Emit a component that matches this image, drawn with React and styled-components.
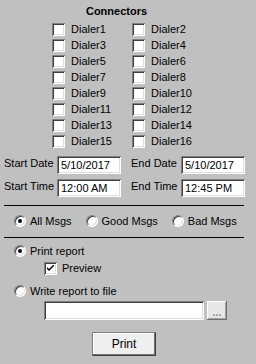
import React from 'react';
import styled, { createGlobalStyle } from 'styled-components';

const GlobalStyle = createGlobalStyle`
  html, body {
    margin: 0;
    padding: 0;
    background: #c0c0c0;
  }
  body {
    font-family: "Liberation Sans", Arial, sans-serif;
    font-size: 11px;
    color: #000;
  }
`

const Panel = styled.div`
  width: 256px;
  height: 364px;
  box-sizing: border-box;
  padding-top: 5px;
  display: flex;
  flex-direction: column;
  background: #c0c0c0;
`

const Connectors = styled.section`
  margin-left: 52px;
  width: 129px;
`

const Title = styled.div`
  font-weight: bold;
  text-align: center;
  line-height: 13px;
`

const DialerGrid = styled.div`
  margin-top: 3px;
  display: grid;
  grid-template-columns: 80px auto;
  grid-auto-rows: 16px;
`

const CheckRow = styled.label`
  display: flex;
  align-items: center;
  gap: ${p => p.gap || 6}px;
  height: ${p => p.h || 16}px;
  margin-left: ${p => p.indent || 0}px;
  margin-top: ${p => p.top || 0}px;
  line-height: 13px;
  white-space: nowrap;
`

const Box = styled.span`
  flex: none;
  width: 13px;
  height: 13px;
  box-sizing: border-box;
  background: #fff;
  box-shadow: inset 1px 1px #808080, inset -1px -1px #fff, inset 2px 2px #404040, inset -2px -2px #dfdfdf;
  display: flex;
  align-items: center;
  justify-content: center;
`

const DateBlock = styled.div`
  margin-top: 7px;
  margin-left: 4px;
  display: flex;
  flex-direction: column;
  gap: 5px;
`

const DateRow = styled.div`
  display: flex;
  gap: 10px;
`

const Field = styled.div`
  display: flex;
  align-items: flex-start;
`

const FieldLabel = styled.span`
  width: ${p => p.w}px;
  line-height: 13px;
  margin-top: 1px;
  white-space: nowrap;
`

const TextBox = styled.input`
  width: ${p => p.w}px;
  height: ${p => p.h || 18}px;
  box-sizing: border-box;
  margin: 0;
  padding: 0 2px 0 4px;
  border: none;
  outline: none;
  background: #fff;
  font: 11px "Liberation Sans", Arial, sans-serif;
  color: #000;
  box-shadow: inset 1px 1px #808080, inset -1px -1px #fff, inset 2px 2px #404040, inset -2px -2px #dfdfdf;
`

const Rule = styled.hr`
  margin: ${p => p.top}px 0 0 4px;
  width: 240px;
  height: 1px;
  border: none;
  background: #000;
`

const FilterRow = styled.div`
  margin-top: 8px;
  margin-left: 14px;
  display: flex;
  gap: 14px;
`

const RadioRow = styled.label`
  display: flex;
  align-items: center;
  gap: 4px;
  height: 14px;
  margin-left: ${p => p.indent || 0}px;
  margin-top: ${p => p.top || 0}px;
  line-height: 13px;
  white-space: nowrap;
`

const Radio = styled.span`
  flex: none;
  position: relative;
  width: 12px;
  height: 12px;
  box-sizing: border-box;
  border-radius: 50%;
  background: #fff;
  border: 1px solid;
  border-color: #808080 #fff #fff #808080;
  box-shadow: inset 1px 1px #404040, inset -1px -1px #dfdfdf;

  &::after {
    content: '';
    display: ${p => (p.on ? 'block' : 'none')};
    position: absolute;
    left: 3px;
    top: 3px;
    width: 4px;
    height: 4px;
    border-radius: 50%;
    background: #000;
  }
`

const FileRow = styled.div`
  margin-top: 3px;
  margin-left: 44px;
  display: flex;
  gap: 3px;
`

const BrowseButton = styled.button`
  width: 20px;
  height: 19px;
  margin: 0;
  padding: 0 0 2px;
  border: none;
  background: #e8e8e8;
  color: #8a8a8a;
  font: bold 11px "Liberation Sans", Arial, sans-serif;
  line-height: 1;
  letter-spacing: 0;
  display: flex;
  align-items: flex-end;
  justify-content: center;
  box-shadow: inset -1px -1px #707070, inset 1px 1px #fff, inset -2px -2px #a0a0a0;
`

const PrintButton = styled.button`
  margin: 12px 0 0 92px;
  width: 64px;
  height: 24px;
  padding: 0;
  border: 1px solid #808080;
  border-right-color: #404040;
  border-bottom-color: #404040;
  background: #efefef;
  color: #000;
  font: 12px "Liberation Sans", Arial, sans-serif;
  box-shadow: inset -1px -1px #707070, inset 1px 1px #fff;
`

const dialers = Array.from({ length: 16 }, (_, i) => `Dialer${i + 1}`)

function Check({ checked }) {
  return (
    <Box>
      {checked && (
        <svg width="7" height="7" viewBox="0 0 7 7">
          <path d="M0 2 L0 4 L2 6 L7 1 L7 -1 L2 4 Z" fill="#000" />
        </svg>
      )}
    </Box>
  )
}

export default function App() {
  return (
    <>
      <GlobalStyle />
      <Panel>
        <Connectors>
          <Title>Connectors</Title>
          <DialerGrid>
            {dialers.map(name => (
              <CheckRow key={name}>
                <Check />
                <span>{name}</span>
              </CheckRow>
            ))}
          </DialerGrid>
        </Connectors>

        <DateBlock>
          <DateRow>
            <Field>
              <FieldLabel w={53}>Start Date</FieldLabel>
              <TextBox w={64} readOnly defaultValue="5/10/2017" />
            </Field>
            <Field>
              <FieldLabel w={50}>End Date</FieldLabel>
              <TextBox w={64} readOnly defaultValue="5/10/2017" />
            </Field>
          </DateRow>
          <DateRow>
            <Field>
              <FieldLabel w={53}>Start Time</FieldLabel>
              <TextBox w={64} readOnly defaultValue="12:00 AM" />
            </Field>
            <Field>
              <FieldLabel w={50}>End Time</FieldLabel>
              <TextBox w={64} readOnly defaultValue="12:45 PM" />
            </Field>
          </DateRow>
        </DateBlock>

        <Rule top={8} />

        <FilterRow>
          <RadioRow><Radio on />All Msgs</RadioRow>
          <RadioRow><Radio />Good Msgs</RadioRow>
          <RadioRow><Radio />Bad Msgs</RadioRow>
        </FilterRow>

        <Rule top={9} />

        <RadioRow indent={14} top={6}><Radio on />Print report</RadioRow>
        <CheckRow indent={44} top={3} h={14} gap={5}>
          <Check checked />
          <span>Preview</span>
        </CheckRow>
        <RadioRow indent={14} top={9}><Radio />Write report to file</RadioRow>

        <FileRow>
          <TextBox w={160} h={19} readOnly defaultValue="" />
          <BrowseButton>...</BrowseButton>
        </FileRow>

        <PrintButton>Print</PrintButton>
      </Panel>
    </>
  )
}
